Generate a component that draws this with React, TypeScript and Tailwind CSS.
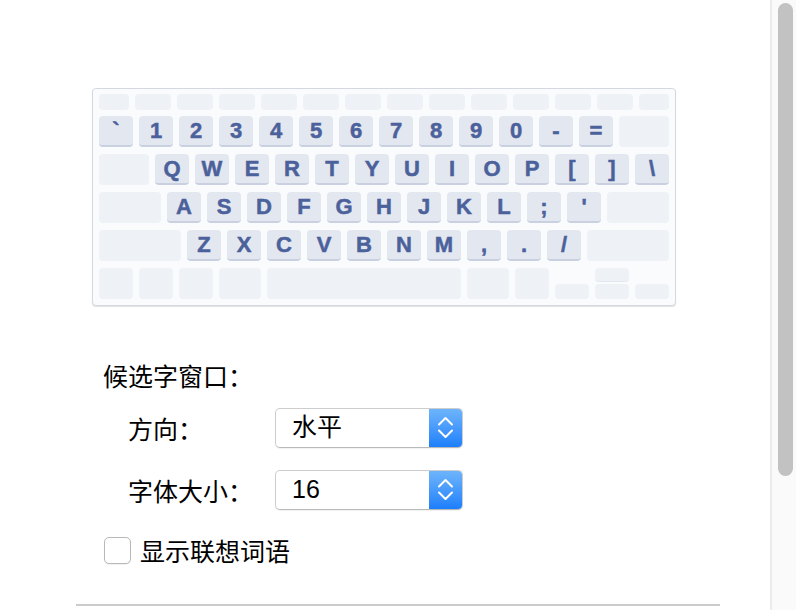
import React from 'react'

type K = { w: number; label?: string }

const FN_ROW: K[] = [{ w: 30 }, ...Array.from({ length: 12 }, () => ({ w: 36 })), { w: 30 }]

const ROWS: K[][] = [
  [...'`1234567890-='.split('').map(c => ({ w: 34, label: c })), { w: 50 }],
  [{ w: 50 }, ...'QWERTYUIOP[]\\'.split('').map(c => ({ w: 34, label: c }))],
  [{ w: 62 }, ...'ASDFGHJKL;\''.split('').map(c => ({ w: 34, label: c })), { w: 62 }],
  [{ w: 82 }, ...'ZXCVBNM,./'.split('').map(c => ({ w: 34, label: c })), { w: 82 }],
]

const BOTTOM_ROW = [34, 34, 34, 42, 194, 42, 34]

function Key({ k }: { k: K }) {
  if (k.label === undefined) {
    return <div className="h-[31px] rounded-[4px] bg-[#eef1f6]" style={{ width: k.w }} />
  }
  return (
    <div
      className="h-[31px] rounded-[4px] bg-[#e3e7f0] border-b-2 border-[#c9d0e0] flex items-center justify-center text-[22px] font-bold text-[#4b619b] leading-none [-webkit-text-stroke:0.5px_#4b619b]"
      style={{ width: k.w, fontFamily: '"Liberation Sans", Arial, sans-serif' }}
    >
      {k.label}
    </div>
  )
}

function Keyboard() {
  return (
    <div className="w-[584px] h-[218px] box-border rounded-[4px] border border-[#d4d9e1] bg-[#fafbfd] shadow-[0_1px_1px_rgba(0,0,0,0.12)] pt-[5px] px-[6px] flex flex-col">
      <div className="flex gap-[6px]">
        {FN_ROW.map((k, i) => (
          <div key={i} className="h-[16px] rounded-[4px] bg-[#eef1f6]" style={{ width: k.w }} />
        ))}
      </div>
      <div className="mt-[6px] flex flex-col gap-[7px]">
        {ROWS.map((row, i) => (
          <div key={i} className="flex gap-[6px]">
            {row.map((k, j) => <Key key={j} k={k} />)}
          </div>
        ))}
        <div className="flex gap-[6px]">
          {BOTTOM_ROW.map((w, i) => (
            <div key={i} className="h-[31px] rounded-[4px] bg-[#eef1f6]" style={{ width: w }} />
          ))}
          {/* arrow keys */}
          <div className="w-[34px] h-[31px] flex flex-col justify-end">
            <div className="h-[15px] rounded-[4px] bg-[#eef1f6]" />
          </div>
          <div className="w-[34px] h-[31px] flex flex-col justify-between">
            <div className="h-[14px] rounded-[4px] bg-[#eef1f6] border-b border-[#e2e6ee]" />
            <div className="h-[15px] rounded-[4px] bg-[#eef1f6]" />
          </div>
          <div className="w-[34px] h-[31px] flex flex-col justify-end">
            <div className="h-[15px] rounded-[4px] bg-[#eef1f6]" />
          </div>
        </div>
      </div>
    </div>
  )
}

function Select({ value }: { value: string }) {
  return (
    <div className="w-[188px] h-[40px] box-border flex rounded-[5px] border border-[#cdcdcd] border-b-[#b9b9b9] bg-white shadow-[0_1px_1px_rgba(0,0,0,0.06)] overflow-hidden">
      <div
        className="flex-1 pl-[16px] flex items-center text-[25px] text-[#000]"
        style={{ fontFamily: '"Liberation Sans", "Noto Sans CJK SC", sans-serif' }}
      >
        {value}
      </div>
      <div className="w-[33px] h-full bg-gradient-to-b from-[#6db4fb] to-[#1a7ffb] flex items-center justify-center">
        <svg width="33" height="40" viewBox="0 0 33 40" fill="none" stroke="white" strokeWidth="2" strokeLinecap="round" strokeLinejoin="round">
          <path d="M10 16.5 L16.5 10 L23 16.5" />
          <path d="M10 22.5 L16.5 29 L23 22.5" />
        </svg>
      </div>
    </div>
  )
}

export default function App() {
  const font = { fontFamily: '"Noto Sans CJK SC", "Liberation Sans", sans-serif' }
  return (
    <div className="w-[796px] h-[610px] flex bg-white overflow-hidden" style={font}>
      <div className="flex-1 flex flex-col pt-[88px]">
        <div className="pl-[92px]">
          <Keyboard />
        </div>

        <div className="mt-[54px] pl-[103px] h-[30px] leading-[30px] text-[25px] text-[#000]">候选字窗口：</div>

        <div className="mt-[18px] pl-[128px] flex flex-col gap-[22px]">
          <div className="flex items-center">
            <div className="w-[147px] text-[25px] leading-[40px] text-[#000]">方向：</div>
            <Select value="水平" />
          </div>
          <div className="flex items-center">
            <div className="w-[147px] text-[25px] leading-[40px] text-[#000]">字体大小：</div>
            <Select value="16" />
          </div>
        </div>

        <label className="mt-[20px] pl-[104px] h-[40px] flex items-center gap-[9px]">
          <span className="w-[27px] h-[27px] box-border rounded-[5px] border border-[#b8b8b8] bg-white shadow-[0_1px_1px_rgba(0,0,0,0.06)]" />
          <span className="text-[25px] leading-[40px] text-[#000]">显示联想词语</span>
        </label>

        <div className="mt-auto mb-[4px] ml-[76px] w-[644px] h-[2px] bg-[#cbcbcb]" />
      </div>

      <div className="w-[26px] h-full border-l-2 border-[#ebebeb] bg-[#fafafa] pt-[3px] pl-[6px] box-border">
        <div className="w-[15px] h-[473px] rounded-full bg-[#c2c2c2]" />
      </div>
    </div>
  )
}
